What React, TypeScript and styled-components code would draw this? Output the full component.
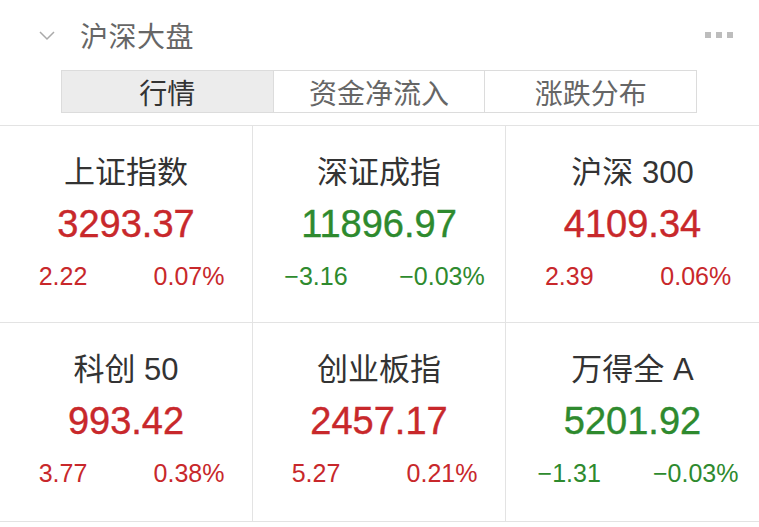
import styled, { createGlobalStyle } from 'styled-components'

const GlobalStyle = createGlobalStyle`
  html, body {
    margin: 0;
    padding: 0;
    background: #fff;
  }
  body {
    font-family: 'Liberation Sans', 'Noto Sans CJK SC', sans-serif;
  }
`

const Page = styled.div`
  width: 759px;
  height: 527px;
  background: #fff;
  overflow: hidden;
`

const Header = styled.div`
  display: flex;
  align-items: center;
  height: 70px;
  padding: 0 24px 0 38px;
`

const Chevron = styled.svg`
  width: 18px;
  height: 12px;
  margin-right: 24px;
  margin-top: 2px;
`

const Title = styled.div`
  flex: 1;
  font-size: 28px;
  color: #666;
  letter-spacing: 0.5px;
`

const Dots = styled.div`
  display: flex;
  gap: 5px;
  margin-right: 2px;

  span {
    width: 6px;
    height: 6px;
    background: #bdbdbd;
  }
`

const Tabs = styled.div`
  display: flex;
  margin: 0 0 0 61px;
  width: 636px;
  height: 43px;
  border: 1px solid #dcdcdc;
  box-sizing: border-box;
`

const Tab = styled.div<{ $active?: boolean }>`
  flex: 1;
  display: flex;
  align-items: center;
  justify-content: center;
  font-size: 28px;
  color: ${(p) => (p.$active ? '#333' : '#666')};
  background: ${(p) => (p.$active ? '#ececec' : '#fff')};

  &:not(:last-child) {
    border-right: 1px solid #dcdcdc;
  }
`

const Grid = styled.div`
  margin-top: 12px;
  display: grid;
  grid-template-columns: 253px 253px 253px;
  grid-template-rows: 197px 198px;
  border-top: 1px solid #e3e3e3;
  border-bottom: 1px solid #e3e3e3;
`

const Cell = styled.div<{ $col: number; $row: number }>`
  display: flex;
  flex-direction: column;
  align-items: center;
  padding-top: 27px;
  box-sizing: border-box;
  border-right: ${(p) => (p.$col < 2 ? '1px solid #e3e3e3' : 'none')};
  border-bottom: ${(p) => (p.$row === 0 ? '1px solid #e3e3e3' : 'none')};
`

const Name = styled.div`
  font-size: 31px;
  line-height: 40px;
  color: #333;
  white-space: pre;
`

const Value = styled.div<{ $up: boolean }>`
  margin-top: 9px;
  font-size: 38px;
  line-height: 44px;
  color: ${(p) => (p.$up ? '#c8282b' : '#2e8a2e')};
  -webkit-text-stroke: 0.4px currentColor;
`

const Changes = styled.div<{ $up: boolean }>`
  margin-top: 15px;
  width: 100%;
  display: grid;
  grid-template-columns: 1fr 1fr;
  font-size: 25px;
  line-height: 30px;
  color: ${(p) => (p.$up ? '#c8282b' : '#2e8a2e')};

  span {
    text-align: center;
  }
`

const indices = [
  { name: '上证指数', value: '3293.37', chg: '2.22', pct: '0.07%', up: true },
  { name: '深证成指', value: '11896.97', chg: '−3.16', pct: '−0.03%', up: false },
  { name: '沪深 300', value: '4109.34', chg: '2.39', pct: '0.06%', up: true },
  { name: '科创 50', value: '993.42', chg: '3.77', pct: '0.38%', up: true },
  { name: '创业板指', value: '2457.17', chg: '5.27', pct: '0.21%', up: true },
  { name: '万得全 A', value: '5201.92', chg: '−1.31', pct: '−0.03%', up: false },
]

export default function App() {
  return (
    <Page>
      <GlobalStyle />
      <Header>
        <Chevron viewBox="0 0 18 12">
          <path d="M2 2 L9 9 L16 2" fill="none" stroke="#aaa" strokeWidth="1.5" />
        </Chevron>
        <Title>沪深大盘</Title>
        <Dots>
          <span />
          <span />
          <span />
        </Dots>
      </Header>
      <Tabs>
        <Tab $active>行情</Tab>
        <Tab>资金净流入</Tab>
        <Tab>涨跌分布</Tab>
      </Tabs>
      <Grid>
        {indices.map((it, i) => (
          <Cell key={it.name} $col={i % 3} $row={Math.floor(i / 3)}>
            <Name>{it.name}</Name>
            <Value $up={it.up}>{it.value}</Value>
            <Changes $up={it.up}>
              <span>{it.chg}</span>
              <span>{it.pct}</span>
            </Changes>
          </Cell>
        ))}
      </Grid>
    </Page>
  )
}
